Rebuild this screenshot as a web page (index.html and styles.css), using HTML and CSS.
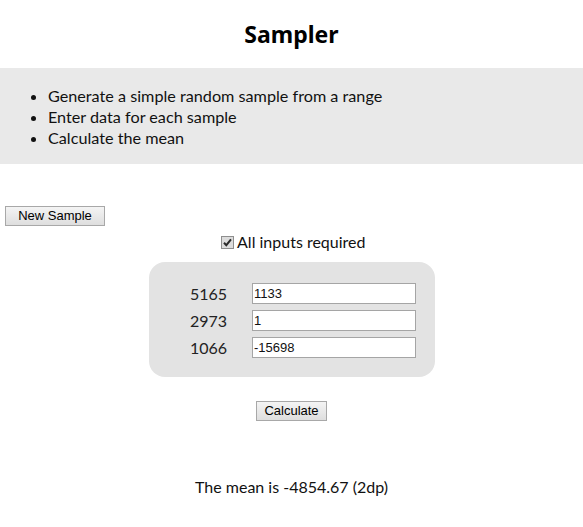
FILE: index.html
```html
<!DOCTYPE html>
<html>
<head>
<meta charset="utf-8">
<link rel="stylesheet" href="styles.css">
</head>
<body>
<h1 class="title">Sampler</h1>
<div class="band">
  <ul class="steps">
    <li>Generate a simple random sample from a range</li>
    <li>Enter data for each sample</li>
    <li>Calculate the mean</li>
  </ul>
</div>
<div class="controls">
  <button class="btn btn-new">New Sample</button>
</div>
<div class="req">
  <label class="req-label"><svg class="chk" width="13" height="13" viewBox="0 0 13 13"><rect x="0.5" y="0.5" width="12" height="12" fill="#dcdcdc" stroke="#8e8e8e"/><path d="M3 6.8 L5.3 9.2 L10 3.4" fill="none" stroke="#2a2a2a" stroke-width="2"/></svg> All inputs required</label>
</div>
<div class="box-wrap">
  <div class="box">
    <span class="lbl">5165</span><input class="field" type="text" value="1133">
    <span class="lbl">2973</span><input class="field" type="text" value="1">
    <span class="lbl">1066</span><input class="field" type="text" value="-15698">
  </div>
</div>
<div class="calc">
  <button class="btn btn-calc">Calculate</button>
</div>
<p class="mean">The mean is -4854.67 (2dp)</p>
</body>
</html>
```

FILE: styles.css
```css
html, body {
  margin: 0;
  padding: 0;
  background: #fff;
}
body {
  font-family: Lato, "Noto Sans", sans-serif;
  font-size: 16px;
  color: #111;
}
.title {
  margin: 0;
  padding-top: 17px;
  height: 68px;
  box-sizing: border-box;
  text-align: center;
  font-family: "Noto Sans", sans-serif;
  font-size: 23px;
  line-height: 34px;
  font-weight: bold;
  color: #000;
}
.band {
  background: #e9e9e9;
  height: 96px;
  box-sizing: border-box;
  padding-top: 17px;
}
.steps {
  margin: 0;
  padding-left: 48px;
  line-height: 21px;
  font-size: 16.2px;
}
.controls {
  padding: 42px 0 0 5px;
  height: 20px;
}
.btn {
  font-family: "Liberation Sans", Arial, sans-serif;
  font-size: 13px;
  color: #000;
  height: 20px;
  padding: 0 6px;
  border: 1px solid #a8a8a8;
  border-radius: 0;
  background: linear-gradient(#f4f4f4, #dedede);
  line-height: 18px;
  box-sizing: border-box;
  display: block;
}
.btn-new { width: 100px; }
.btn-calc { width: 71px; margin: 0 auto; }
.req {
  margin-top: 5px;
  text-align: center;
  line-height: 22px;
  font-size: 16px;
  height: 22px;
}
.req-label { margin-left: 3px; }
.chk {
  vertical-align: -1px;
}
.box-wrap {
  margin-top: 9px;
  display: flex;
  justify-content: center;
}
.box {
  width: 286px;
  height: 115px;
  box-sizing: border-box;
  margin-left: 1px;
  background: #e3e3e3;
  border-radius: 16px;
  padding: 21px 19px 0 41px;
  display: grid;
  grid-template-columns: 35px 164px;
  column-gap: 27px;
  row-gap: 6px;
  grid-auto-rows: 21px;
  align-items: center;
}
.lbl {
  font-size: 16px;
  line-height: 21px;
  color: #222;
}
.field {
  width: 164px;
  height: 21px;
  box-sizing: border-box;
  border: 1px solid #a5a5a5;
  padding: 0 1px;
  margin: 0;
  font-family: "Liberation Sans", Arial, sans-serif;
  font-size: 13px;
  color: #111;
  background: #fff;
}
.calc {
  margin-top: 24px;
}
.mean {
  margin: 55px 0 0;
  text-align: center;
  font-size: 16px;
  line-height: 22px;
}
```
